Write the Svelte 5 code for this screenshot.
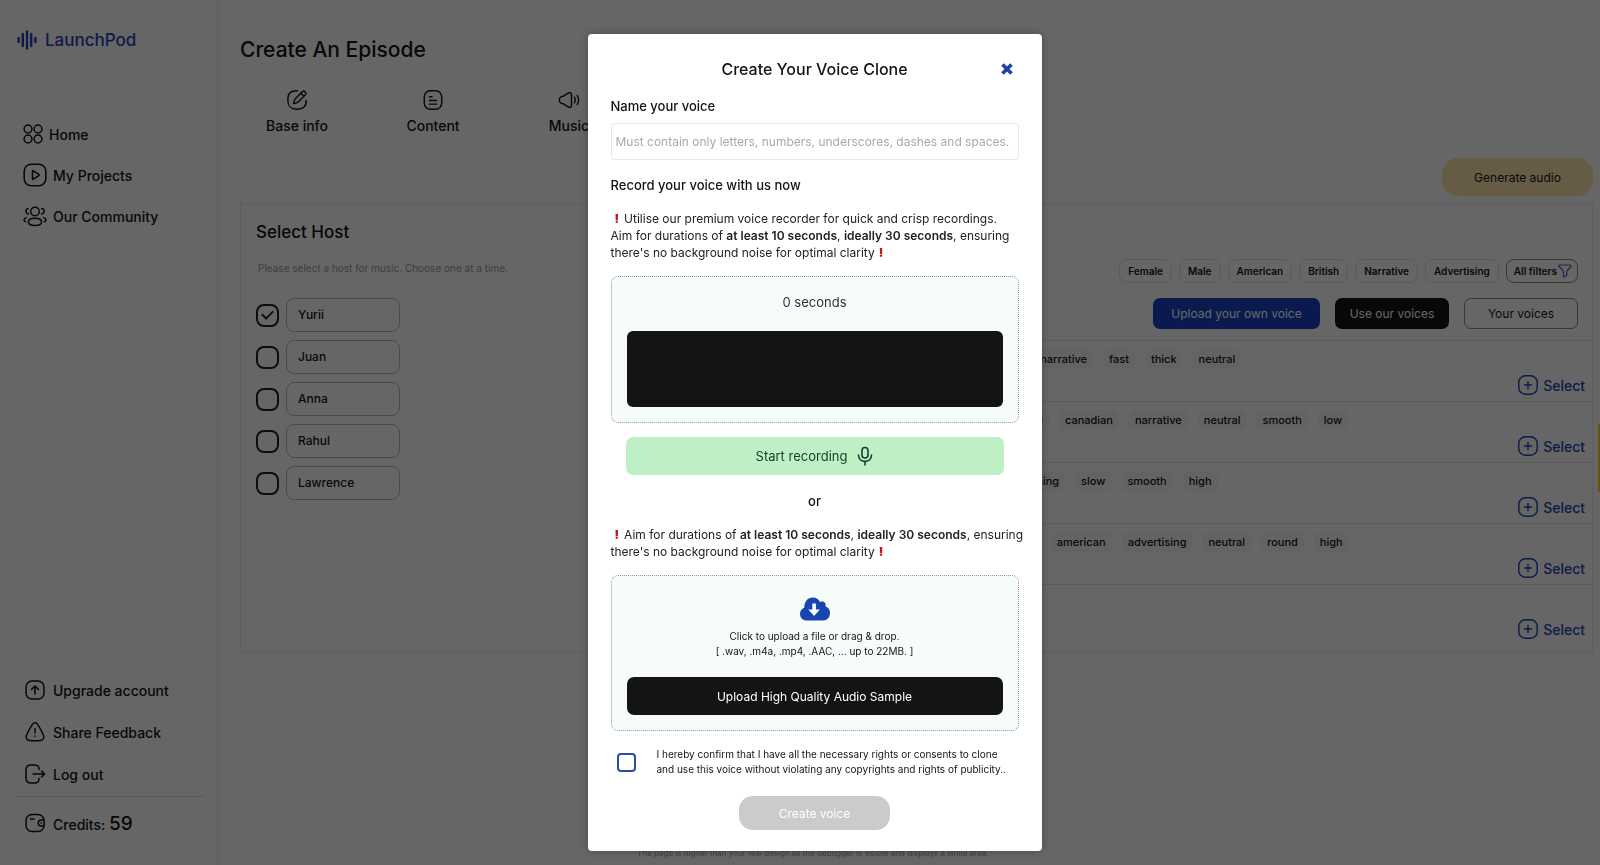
<script>
	let voiceName = '';
	let agreed = false;
	let host = 'Yurii';

	const hosts = ['Yurii', 'Juan', 'Anna', 'Rahul', 'Lawrence'];
	const filters = ['Female', 'Male', 'American', 'British', 'Narrative', 'Advertising'];
	const voices = [
		{ name: 'Christopher', tags: ['narrative', 'fast', 'thick', 'neutral'] },
		{ name: 'Charles', tags: ['male', 'canadian', 'narrative', 'neutral', 'smooth', 'low'] },
		{ name: 'Matt', tags: ['advertising', 'slow', 'smooth', 'high'] },
		{ name: 'Susan', tags: ['male', 'american', 'advertising', 'neutral', 'round', 'high'] },
		{ name: 'Ruby', tags: [] },
	];
</script>

<div class="page">
	<aside>
		<a class="logo" href="#home">
			<svg width="20" height="20" viewBox="0 0 20 20" fill="none" stroke="currentColor" stroke-width="2.4" stroke-linecap="round">
				<path d="M1.6 8v4M5.8 4v12M10 1.5v17M14.2 4v12M18.4 8v4" />
			</svg>
			LaunchPod
		</a>
		<nav>
			<a href="#home">
				<svg width="20" height="20" viewBox="0 0 20 20" fill="none" stroke="currentColor" stroke-width="1.5">
					<circle cx="5" cy="5" r="3.9" /><circle cx="15" cy="5" r="3.9" />
					<circle cx="5" cy="15" r="3.9" /><circle cx="15" cy="15" r="3.9" />
				</svg>
				Home
			</a>
			<a href="#projects">
				<svg width="24" height="24" viewBox="0 0 24 24" fill="none" stroke="currentColor" stroke-width="1.6" stroke-linejoin="round">
					<rect x="1.2" y="1.2" width="21.6" height="21.6" rx="7" />
					<path d="M9.5 8.2v7.6q0 .8.8.4l5.5-3.6q.7-.6 0-1.2l-5.5-3.6q-.8-.4-.8.4z" />
				</svg>
				My Projects
			</a>
			<a href="#community">
				<svg width="24" height="24" viewBox="0 0 24 24" fill="none" stroke="currentColor" stroke-width="1.5" stroke-linecap="round">
					<circle cx="12" cy="7.5" r="4.3" />
					<path d="M12 14.3c4 0 6.6 1.6 6.6 3.7 0 2.2-2.6 3.5-6.6 3.5s-6.600-1.300-6.600-3.500c0-2.100 2.600-3.700 6.600-3.700z" />
					<path d="M5.200 4.500c-3 .5-3 4.800.2 5.500M18.800 4.500c3 .5 3 4.800-.2 5.500M3.400 13.600c-2.800.8-3 3.200-.8 4.200M20.600 13.600c2.800.8 3 3.200.8 4.200" />
				</svg>
				Our Community
			</a>
		</nav>
		<nav class="account">
			<a href="#upgrade">
				<svg width="24" height="24" viewBox="0 0 24 24" fill="none" stroke="currentColor" stroke-width="1.5" stroke-linecap="round" stroke-linejoin="round">
					<rect x="3" y="3" width="18" height="18" rx="6" />
					<path d="M12 16V8.500M8.500 11.500L12 8l3.500 3.500" />
				</svg>
				Upgrade account
			</a>
			<a href="#feedback">
				<svg width="24" height="24" viewBox="0 0 24 24" fill="none" stroke="currentColor" stroke-width="1.5" stroke-linecap="round">
					<path d="M9.200 4.600c1.500-2.400 4.100-2.400 5.600 0 2.300 3.600 4.200 7 5.800 11 .9 2.600-.4 4.600-3 4.900-3.700.4-7.500.4-11.200 0-2.600-.3-3.900-2.300-3-4.900 1.600-4 3.500-7.400 5.800-11z" />
					<path d="M12 8.500v4.500M12 16v.3" />
				</svg>
				Share Feedback
			</a>
			<a href="#logout">
				<svg width="24" height="24" viewBox="0 0 24 24" fill="none" stroke="currentColor" stroke-width="1.5" stroke-linecap="round" stroke-linejoin="round">
					<path d="M16 7.500V7c0-2.800-1.600-4-4.400-4H8C4.600 3 3 4.600 3 8v8c0 3.400 1.600 5 5 5h3.600c2.800 0 4.400-1.200 4.400-4v-.5M10 12h11M18.500 9l3 3-3 3" />
				</svg>
				Log out
			</a>
			<hr />
			<a href="#credits">
				<svg width="24" height="24" viewBox="0 0 24 24" fill="none" stroke="currentColor" stroke-width="1.5" stroke-linecap="round">
					<rect x="3" y="3.500" width="18" height="17" rx="6" />
					<path d="M7.500 8h3.500M21 9h-2.800c-4 0-4 6 0 6H21M18 12h.3" />
				</svg>
				<span>Credits: <b>59</b></span>
			</a>
		</nav>
	</aside>

	<main>
		<h1>Create An Episode</h1>
		<div class="steps">
			<a href="#base">
				<svg width="22" height="22" viewBox="0 0 24 24" fill="none" stroke="currentColor" stroke-width="1.6" stroke-linecap="round" stroke-linejoin="round">
					<path d="M12.500 2C5 1.800 2 4.500 2 12s3 10 10 10 10.200-3 10-9.500" />
					<path d="M18.200 2.600l-8 8c-1 1-1.700 3.500-1.900 5.200 1.800-.1 4.300-.8 5.300-1.800l7.800-7.900c1.500-1.700-1.500-5-3.200-3.500zM16.300 4.600l3.200 3.200" />
				</svg>
				Base info
			</a>
			<a href="#content">
				<svg width="22" height="22" viewBox="0 0 24 24" fill="none" stroke="currentColor" stroke-width="1.6" stroke-linecap="round">
					<rect x="2.500" y="2" width="19" height="20" rx="6.500" />
					<path d="M8 8.500h3M8 12.500h8M8 16.500h8" />
				</svg>
				Content
			</a>
			<a href="#music">
				<svg width="22" height="22" viewBox="0 0 24 24" fill="none" stroke="currentColor" stroke-width="1.6" stroke-linecap="round" stroke-linejoin="round">
					<path d="M5.500 8l5.500-3.600c2-1.200 3.700-.2 3.700 2v11.200c0 2.200-1.700 3.200-3.700 2L5.500 16C2 15.500 1.500 14.500 1.500 12s.5-3.500 4-4z" />
					<path d="M18 9c1 2 1 4 0 6M21 7c2 3.300 2 6.700 0 10" />
				</svg>
				Music
			</a>
		</div>
		<button class="generate">Generate audio</button>

		<section class="panel">
			<div class="host-column">
				<h2>Select Host</h2>
				<p>Please select a host for music. Choose one at a time.</p>
				{#each hosts as name}
					<label class="host">
						<input type="checkbox" checked={host === name} on:change={() => (host = name)} />
						<span>{name}</span>
					</label>
				{/each}
			</div>
			<div class="voice-column">
				<div class="filters">
					{#each filters as filter}
						<button>{filter}</button>
					{/each}
					<button class="all">All filters<svg width="14" height="14" viewBox="0 0 14 14" fill="none" stroke="#4a63b5" stroke-width="1.2" stroke-linejoin="round"><path d="M2 1h10q1.500 0 1 1.500L8.800 7v4.500L5.500 13V7L1 2.500Q.5 1 2 1z" /></svg></button>
				</div>
				<div class="sources">
					<button class="upload-own">Upload your own voice</button>
					<button class="ours">Use our voices</button>
					<button class="yours">Your voices</button>
				</div>
				<ul>
					{#each voices as voice}
						<li>
							<div class="tags">
								<strong>{voice.name}</strong>
								{#each voice.tags as tag}
									<span>{tag}</span>
								{/each}
							</div>
							<button class="select">
								<svg width="20" height="20" viewBox="0 0 20 20" fill="none" stroke="currentColor" stroke-width="1.4" stroke-linecap="round">
									<rect x=".8" y=".8" width="18.400" height="18.400" rx="6.500" />
									<path d="M10 6.500v7M6.500 10h7" />
								</svg>
								Select
							</button>
						</li>
					{/each}
				</ul>
			</div>
		</section>
	</main>
</div>

<footer>The page is higher than your real design as the debugger is visible and displays a white area.</footer>
<div class="side-tab"></div>

<div class="overlay">
	<form class="modal" role="dialog" aria-labelledby="clone-title" on:submit|preventDefault>
		<header>
			<h2 id="clone-title">Create Your Voice Clone</h2>
			<button type="button" class="close" aria-label="Close">
				<svg width="12" height="12" viewBox="0 0 12 12" stroke="currentColor" stroke-width="3.6"><path d="M1.500 1.500l9 9M10.500 1.500l-9 9" /></svg>
			</button>
		</header>

		<label class="title" for="voice-name">Name your voice</label>
		<input id="voice-name" class="name" type="text" placeholder="Must contain only letters, numbers, underscores, dashes and spaces." bind:value={voiceName} />

		<h3 class="title">Record your voice with us now</h3>
		<p class="note">
			<i>!</i>Utilise our premium voice recorder for quick and crisp recordings.<br />
			Aim for durations of <b>at least 10 seconds</b>, <b>ideally 30 seconds</b>, ensuring<br />
			there's no background noise for optimal clarity<i>!</i>
		</p>
		<div class="box recorder">
			<span>0 seconds</span>
			<div class="wave"></div>
		</div>
		<button type="button" class="record">
			Start recording
			<svg width="16" height="20" viewBox="0 0 16 20" fill="none" stroke="currentColor" stroke-width="1.6" stroke-linecap="round">
				<rect x="5" y="1.500" width="6" height="10.500" rx="3" />
				<path d="M1.500 9c0 8.500 13 8.500 13 0M8 15.500V19" />
			</svg>
		</button>

		<p class="or">or</p>

		<p class="note">
			<i>!</i>Aim for durations of <b>at least 10 seconds</b>, <b>ideally 30 seconds</b>, ensuring<br />
			there's no background noise for optimal clarity<i>!</i>
		</p>
		<div class="box uploader">
			<svg width="30" height="24" viewBox="0 0 30 24">
				<path fill="#1845b0" d="M7 23.500C3 23.500 0 20.800 0 17c0-3.200 1.800-5.300 4.200-6.200C4.300 4.600 7.800.5 12.800.5c3.400 0 6 1.700 7.300 4.600 3-1.600 6.300.8 5.500 4.300 2.700.9 4.400 3 4.400 6.400 0 4.600-2.600 7.700-7 7.700z" />
				<path fill="#fff" d="M12.300 6.500h3.600v6h4L14.100 19l-5.800-6.500h4z" />
			</svg>
			<p>Click to upload a file or drag &amp; drop.<br />[ .wav, .m4a, .mp4, .AAC, ... up to 22MB. ]</p>
			<button type="button" class="sample">Upload High Quality Audio Sample</button>
		</div>

		<label class="confirm">
			<input type="checkbox" bind:checked={agreed} />
			<span>I hereby confirm that I have all the necessary rights or consents to clone<br />and use this voice without violating any copyrights and rights of publicity..</span>
		</label>
		<button class="create" disabled={!agreed}>Create voice</button>
	</form>
</div>

<style>
	:global(body) {
		margin: 0;
		background: #fff;
		color: #141414;
		font-family: Inter, "Open Sans", sans-serif;
		font-size: 14px;
		overflow: hidden;
	}
	:global(*) {
		box-sizing: border-box;
	}
	h1, h2, h3, p, ul {
		margin: 0;
		padding: 0;
		font-weight: 500;
	}
	a {
		color: inherit;
		text-decoration: none;
	}
	button, input {
		font: inherit;
		color: inherit;
	}
	button {
		padding: 0;
		border: none;
		background: none;
		cursor: pointer;
	}
	svg {
		flex: none;
	}

	.page {
		display: flex;
		height: 100vh;
	}
	aside {
		display: flex;
		flex-direction: column;
		flex: none;
		width: 218px;
		padding: 28px 13px 30px 17px;
		border-right: 1px solid #e8e8e8;
		font-weight: 500;
	}
	.logo {
		display: flex;
		align-items: center;
		gap: 8px;
		height: 24px;
		color: #1f45b5;
		font-size: 17px;
	}
	nav {
		display: flex;
		flex-direction: column;
		gap: 17px;
		margin-top: 70px;
	}
	nav a {
		display: flex;
		align-items: center;
		gap: 6px;
		height: 24px;
		padding-left: 6px;
	}
	.account {
		gap: 18px;
		margin-top: auto;
	}
	.account b {
		font-size: 19px;
		font-weight: 500;
	}
	hr {
		width: 100%;
		margin: -8px 0 -4px;
		border: none;
		border-top: 1px solid #e0e0e0;
	}

	main {
		flex: 1;
		min-width: 0;
		padding: 35px 7px 0 21px;
	}
	h1 {
		padding-left: 1px;
		font-size: 21px;
		line-height: 30px;
	}
	.steps {
		display: flex;
		gap: 20px;
		margin-top: 24px;
		font-weight: 500;
	}
	.steps a {
		display: flex;
		flex-direction: column;
		align-items: center;
		gap: 5px;
		width: 116px;
		line-height: 20px;
	}
	.generate {
		display: block;
		width: 151px;
		height: 38px;
		margin: 22px 0 7px auto;
		border-radius: 16px;
		background: #ffe6ad;
		font-size: 12px;
	}
	.panel {
		display: flex;
		justify-content: space-between;
		height: 449px;
		margin-left: 1px;
		border: 1px solid #eaeaea;
	}
	.host-column {
		padding: 16px 15px;
	}
	.host-column h2 {
		font-size: 17px;
		line-height: 24px;
	}
	.host-column p {
		margin: 16px 2px 22px;
		color: #9c9c9c;
		font-size: 10px;
		font-weight: 400;
		line-height: 16px;
	}
	.host {
		display: flex;
		align-items: center;
		gap: 7px;
		margin-bottom: 8px;
		font-size: 12px;
		font-weight: 500;
	}
	.host input {
		display: grid;
		place-items: center;
		appearance: none;
		width: 23px;
		height: 23px;
		margin: 0;
		border: 2px solid #222;
		border-radius: 8px;
	}
	.host input:checked::after {
		content: "";
		width: 9px;
		height: 5px;
		margin-bottom: 3px;
		border: solid #222;
		border-width: 0 0 2px 2px;
		transform: rotate(-45deg);
	}
	.host span {
		width: 114px;
		height: 34px;
		padding-left: 11px;
		border: 1px solid #bbb;
		border-radius: 8px;
		line-height: 32px;
	}

	.voice-column {
		width: 632px;
		padding-top: 55px;
	}
	.filters {
		display: flex;
		justify-content: flex-end;
		gap: 7px;
		padding-right: 14px;
	}
	.filters button {
		display: flex;
		align-items: center;
		height: 24px;
		padding: 0 8px;
		border: 1px solid #e2e2e2;
		border-radius: 8px;
		font-size: 10px;
		font-weight: 600;
	}
	.filters .all {
		gap: 1px;
		padding: 0 5px 0 7px;
		border-color: #8a8a8a;
	}
	.sources {
		display: flex;
		justify-content: flex-end;
		gap: 15px;
		margin: 15px 14px 11px 0;
	}
	.sources button {
		width: 114px;
		height: 31px;
		border-radius: 7px;
		font-size: 12px;
	}
	.sources .upload-own {
		width: 167px;
		background: #1943c4;
		color: #fff;
	}
	.sources .ours {
		background: #141414;
		color: #fff;
	}
	.sources .yours {
		border: 1px solid #8a8a8a;
	}
	li {
		display: flex;
		align-items: flex-end;
		justify-content: space-between;
		height: 61px;
		padding: 0 7px 5px 0;
		border-top: 1px solid #e8e8e8;
	}
	.tags {
		display: flex;
		align-items: center;
		align-self: flex-start;
		gap: 10px;
		padding-top: 8px;
		font-size: 11px;
		font-weight: 500;
		line-height: 20px;
	}
	.tags span {
		padding: 0 6px;
		border-radius: 6px;
		background: #f8f8f8;
	}
	.select {
		display: flex;
		align-items: center;
		gap: 5px;
		height: 22px;
		color: #1f45b5;
		font-weight: 500;
	}
	footer {
		position: fixed;
		right: 0;
		bottom: 6px;
		left: 26px;
		color: #a0a0a0;
		font-size: 8px;
		line-height: 12px;
		text-align: center;
	}
	.side-tab {
		position: fixed;
		top: 424px;
		right: 0;
		width: 2px;
		height: 68px;
		background: #ffd21f;
	}

	.overlay {
		position: fixed;
		inset: 0;
		display: flex;
		align-items: flex-start;
		justify-content: center;
		padding: 34px 0 0 29px;
		background: rgba(0, 0, 0, 0.6);
	}
	.modal {
		display: flex;
		flex-direction: column;
		width: 454px;
		padding: 22px 23px 21px;
		border-radius: 4px;
		background: #fff;
		box-shadow: 0 0 10px rgba(0, 0, 0, 0.3);
	}
	.modal header {
		display: grid;
		grid-template-columns: 24px 1fr 24px;
		align-items: center;
	}
	.modal h2 {
		grid-column: 2;
		font-size: 16px;
		line-height: 26px;
		text-align: center;
	}
	.close {
		display: flex;
		justify-content: center;
		color: #1a43a8;
	}
	.title {
		margin-top: 14px;
		font-size: 13px;
		font-weight: 500;
		line-height: 20px;
	}
	.name {
		height: 37px;
		margin-top: 7px;
		padding: 0 4px;
		border: 1px solid #e8e8e8;
		border-radius: 3px;
		font-size: 12px;
	}
	.name::placeholder {
		color: #a9a9a9;
	}
	h3.title {
		margin-top: 15px;
	}
	.note {
		margin-top: 15px;
		color: #222;
		font-size: 12px;
		font-weight: 400;
		line-height: 17px;
		white-space: nowrap;
	}
	.note b {
		font-weight: 600;
	}
	.note i {
		margin: 0 5px 0 4px;
		color: #c4161c;
		font-style: normal;
		font-weight: 900;
	}
	.box {
		display: flex;
		flex-direction: column;
		margin-top: 15px;
		padding: 15px;
		border: 1px dotted #8f9a92;
		border-radius: 7px;
		background: #f6fdf8;
		text-align: center;
	}
	.recorder {
		gap: 19px;
	}
	.recorder span {
		color: #333;
		font-size: 13px;
		line-height: 20px;
	}
	.wave {
		height: 76px;
		border-radius: 6px;
		background: #141414;
	}
	.record {
		display: flex;
		align-items: center;
		justify-content: center;
		gap: 10px;
		height: 38px;
		margin: 14px 15px 0;
		border-radius: 7px;
		background: #beefc5;
		color: #14432c;
		font-size: 13px;
	}
	.or {
		margin: 16px 0 0;
		font-size: 13px;
		line-height: 20px;
		text-align: center;
	}
	.uploader {
		align-items: center;
		padding-top: 21px;
	}
	.uploader p {
		margin: 8px 0 18px;
		font-size: 10px;
		font-weight: 400;
		line-height: 15px;
	}
	.sample {
		align-self: stretch;
		height: 38px;
		border-radius: 7px;
		background: #141414;
		color: #fff;
		font-size: 12px;
	}
	.confirm {
		display: flex;
		align-items: center;
		gap: 21px;
		margin: 16px 0 0 6px;
		font-size: 10px;
		line-height: 15px;
		white-space: nowrap;
	}
	.confirm input {
		flex: none;
		appearance: none;
		width: 19px;
		height: 19px;
		margin: 0;
		border: 2px solid #2a4f9e;
		border-radius: 4px;
	}
	.confirm input:checked {
		background: #2a4f9e;
	}
	.create {
		align-self: center;
		width: 151px;
		height: 34px;
		margin-top: 19px;
		border-radius: 14px;
		background: #1943c4;
		color: #fff;
		font-size: 12px;
	}
	.create:disabled {
		background: #cbcbcb;
	}
</style>
